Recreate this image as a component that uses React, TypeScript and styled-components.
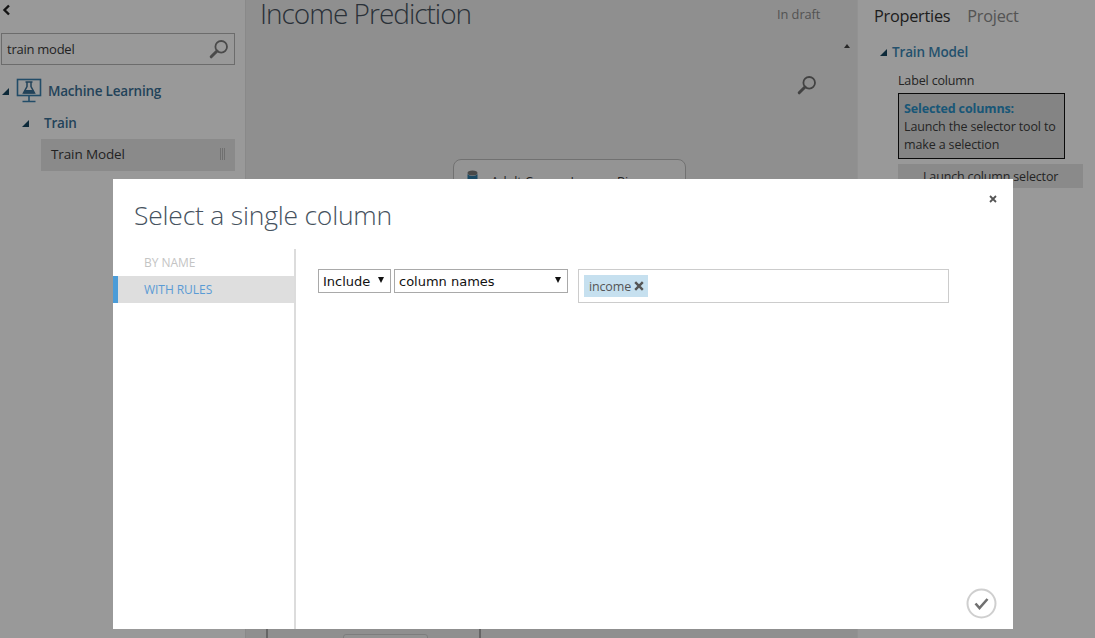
import React from "react";
import styled, { createGlobalStyle } from "styled-components";

const GlobalStyle = createGlobalStyle`
  html, body {
    margin: 0;
    padding: 0;
    background: #fff;
  }
  * {
    box-sizing: border-box;
  }
`;

const Page = styled.div`
  position: relative;
  width: 1095px;
  height: 638px;
  overflow: hidden;
  display: grid;
  grid-template-columns: 245px 612px 238px;
  font-family: "Open Sans", "Noto Sans", sans-serif;
  color: #3c3c3c;
  background: #fff;
`;

const Scrim = styled.div`
  position: absolute;
  inset: 0;
  background: rgba(0, 0, 0, 0.4);
`;

/* left palette */
const Palette = styled.aside`
  display: flex;
  flex-direction: column;
  padding: 0 10px 0 1px;
  background: #fff;
`;

const BackRow = styled.div`
  height: 33px;
  padding: 4px 0 0 1px;
  svg {
    display: block;
  }
`;

const SearchBox = styled.div`
  display: flex;
  align-items: center;
  justify-content: space-between;
  height: 32px;
  padding: 0 5px 0 5px;
  border: 1px solid #b4b4b4;
  font-size: 13px;
  letter-spacing: -0.25px;
  color: #3a3a3a;
`;

const TreeRow = styled.div<{ $indent: number; $height: number }>`
  display: flex;
  align-items: center;
  height: ${(p) => p.$height}px;
  padding-left: ${(p) => p.$indent}px;
  font-size: 13.5px;
  font-weight: 600;
  letter-spacing: -0.2px;
  color: #3a7096;
`;

const Caret = styled.span<{ $gap: number }>`
  width: 0;
  height: 0;
  margin-right: ${(p) => p.$gap}px;
  border-style: solid;
  border-width: 0 0 7px 7px;
  border-color: transparent transparent #14455f transparent;
`;

const ModuleRow = styled.div`
  display: flex;
  align-items: center;
  justify-content: space-between;
  height: 32px;
  margin: 10px 0 0 40px;
  padding: 0 10px 2px 10px;
  background: #e6e6e6;
  font-size: 13.5px;
  letter-spacing: -0.12px;
  color: #3a3a3a;
`;

const Grip = styled.span`
  width: 5px;
  height: 12px;
  border-left: 1px solid #bbb;
  border-right: 1px solid #bbb;
  background: linear-gradient(90deg, transparent 1px, #bbb 1px, #bbb 2px, transparent 2px);
`;

const FlaskIcon = styled.svg`
  flex: none;
  margin-right: 6px;
`;

/* experiment canvas */
const Canvas = styled.main`
  position: relative;
  background: #efefef;
  border-left: 1px solid #e4e4e4;
`;

const ExperimentTitle = styled.h1`
  position: absolute;
  top: -1px;
  left: 14px;
  margin: 0;
  font-size: 28px;
  line-height: 28px;
  font-weight: 300;
  letter-spacing: -1.01px;
  white-space: nowrap;
  color: #46525e;
`;

const DraftLabel = styled.span`
  position: absolute;
  top: 5px;
  left: 531px;
  font-size: 12.8px;
  letter-spacing: -0.05px;
  color: #8a8a8a;
`;

const ScrollArrow = styled.span`
  position: absolute;
  top: 44px;
  left: 598px;
  width: 0;
  height: 0;
  border-style: solid;
  border-width: 0 3.5px 4px 3.5px;
  border-color: transparent transparent #444 transparent;
`;

const ZoomIcon = styled.span`
  position: absolute;
  top: 75px;
  left: 551px;
  line-height: 0;
`;

const DatasetNode = styled.div`
  position: absolute;
  top: 159px;
  left: 207px;
  width: 233px;
  height: 60px;
  padding: 13px 0 0 37px;
  border: 1px solid #bdbdbd;
  border-radius: 8px;
  background: #f7f7f7;
  font-size: 12.5px;
  color: #3a3a3a;
`;

const DatasetIcon = styled.span`
  position: absolute;
  top: 10px;
  left: 13px;
  line-height: 0;
`;

const ContainerEdge = styled.span<{ $left: number }>`
  position: absolute;
  top: 620px;
  left: ${(p) => p.$left}px;
  width: 2px;
  height: 18px;
  background: #a8a8a8;
`;

const BottomNode = styled.div`
  position: absolute;
  top: 634px;
  left: 97px;
  width: 85px;
  height: 10px;
  border: 1px solid #d0d0d0;
  border-radius: 3px;
  background: #f4f4f4;
`;

/* properties panel */
const Properties = styled.aside`
  display: flex;
  flex-direction: column;
  padding: 4px 12px 0 16px;
  background: #fff;
  border-left: 1px solid #f4f4f4;
`;

const Tabs = styled.div`
  display: flex;
  gap: 17px;
  height: 35px;
`;

const Tab = styled.span<{ $active?: boolean }>`
  font-size: 16.3px;
  line-height: 24px;
  letter-spacing: -0.25px;
  color: ${(p) => (p.$active ? "#333" : "#8c8c8c")};
`;

const SectionTitle = styled.div`
  display: flex;
  align-items: center;
  gap: 5px;
  height: 26px;
  padding-left: 6px;
  font-size: 13.5px;
  font-weight: 600;
  letter-spacing: -0.15px;
  color: #3c88b6;
`;

const FieldLabel = styled.div`
  margin: 6px 0 0 24px;
  height: 22px;
  font-size: 12.5px;
  line-height: 20px;
  letter-spacing: -0.15px;
  color: #3c3c3c;
`;

const SelectionBox = styled.div`
  margin: 0 18px 0 24px;
  padding: 6px 5px 0 5px;
  height: 66px;
  border: 1px solid #111;
  background: #dcdcdc;
  font-size: 12.5px;
  line-height: 18px;
  letter-spacing: -0.14px;
  color: #3c3c3c;
  strong {
    display: block;
    font-weight: 700;
    color: #2a90c6;
  }
`;

const SelectorButton = styled.div`
  margin: 5px 0 0 24px;
  height: 24px;
  padding-left: 25px;
  background: #e6e6e6;
  font-size: 12.5px;
  line-height: 25px;
  letter-spacing: -0.16px;
  color: #3c3c3c;
`;

/* dialog */
const Dialog = styled.section`
  position: absolute;
  top: 179px;
  left: 113px;
  width: 900px;
  height: 450px;
  display: flex;
  flex-direction: column;
  background: #fff;
`;

const DialogHeader = styled.header`
  height: 70px;
  padding: 16px 0 0 21px;
`;

const DialogTitle = styled.h2`
  margin: 0;
  font-size: 26.5px;
  line-height: 40px;
  font-weight: 300;
  letter-spacing: -0.22px;
  color: #46525e;
`;

const CloseButton = styled.span`
  position: absolute;
  top: 16px;
  left: 876px;
  line-height: 0;
`;

const DialogBody = styled.div`
  flex: 1;
  display: flex;
  min-height: 0;
`;

const Nav = styled.nav`
  flex: none;
  width: 183px;
  border-right: 2px solid #dcdcdc;
`;

const NavItem = styled.div<{ $active?: boolean }>`
  height: 27px;
  padding-left: ${(p) => (p.$active ? 26 : 31)}px;
  border-left: ${(p) => (p.$active ? "5px solid #4b9cd8" : "none")};
  background: ${(p) => (p.$active ? "#dedede" : "transparent")};
  font-size: 12px;
  line-height: 27px;
  letter-spacing: -0.05px;
  color: ${(p) => (p.$active ? "#5a9bd5" : "#c4c4c4")};
`;

const RuleArea = styled.div`
  flex: 1;
  display: flex;
  align-items: flex-start;
  padding: 20px 0 0 22px;
`;

const SelectBox = styled.div<{ $width: number; $gap: number }>`
  display: flex;
  align-items: center;
  justify-content: space-between;
  width: ${(p) => p.$width}px;
  height: 24px;
  margin-right: ${(p) => p.$gap}px;
  padding: 0 6px 0 4px;
  border: 1px solid #a9a9a9;
  font-family: "DejaVu Sans", sans-serif;
  font-size: 13px;
  color: #111;
`;

const SelectArrow = styled.span`
  width: 0;
  height: 0;
  margin-bottom: 2px;
  border-style: solid;
  border-width: 6px 3.5px 0 3.5px;
  border-color: #111 transparent transparent transparent;
`;

const TagInput = styled.div`
  display: flex;
  align-items: center;
  width: 371px;
  height: 34px;
  padding-left: 5px;
  border: 1px solid #ccc;
`;

const Tag = styled.span`
  display: flex;
  align-items: center;
  gap: 3px;
  height: 22px;
  padding: 0 4px 0 5px;
  background: #c6e0ef;
  font-size: 12.5px;
  letter-spacing: -0.15px;
  color: #555;
`;

const ConfirmButton = styled.span`
  position: absolute;
  top: 409px;
  left: 853px;
  line-height: 0;
`;

const SearchGlyph = ({ size, color }: { size: number; color: string }) => (
  <svg width={size} height={size} viewBox="0 0 20 20" fill="none">
    <circle cx="12.2" cy="7.8" r="5.8" stroke={color} strokeWidth="1.8" />
    <path d="M8 12 L2.2 17.8" stroke={color} strokeWidth="3" strokeLinecap="round" />
  </svg>
);

export default function App() {
  return (
    <>
      <GlobalStyle />
      <Page>
        <Palette>
          <BackRow>
            <svg width="9" height="12" viewBox="0 0 9 12" fill="none">
              <path d="M7 1.5 L2.5 6 L7 10.5" stroke="#222" strokeWidth="2.4" />
            </svg>
          </BackRow>
          <SearchBox>
            train model
            <SearchGlyph size={20} color="#7c7c7c" />
          </SearchBox>
          <TreeRow $indent={1} $height={52}>
            <Caret $gap={7} />
            <FlaskIcon width="26" height="26" viewBox="0 0 26 26" fill="none">
              <rect x="1.5" y="1.5" width="23" height="16" stroke="#3a7fae" strokeWidth="1.6" />
              <path d="M9.5 4 H16.5 M11 4 V8.5 L7.5 15 H18.5 L15 8.5 V4" stroke="#3a6f94" strokeWidth="1.5" />
              <path d="M8.5 12 H17.5 L18.5 15.5 H7.5 Z" fill="#3a6f94" />
              <path d="M13 18 V23 M6.5 23.5 H19.5" stroke="#3a7fae" strokeWidth="1.6" />
            </FlaskIcon>
            Machine Learning
          </TreeRow>
          <TreeRow $indent={21} $height={12}>
            <Caret $gap={15} />
            Train
          </TreeRow>
          <ModuleRow>
            Train Model
            <Grip />
          </ModuleRow>
        </Palette>

        <Canvas>
          <ExperimentTitle>Income Prediction</ExperimentTitle>
          <DraftLabel>In draft</DraftLabel>
          <ScrollArrow />
          <ZoomIcon>
            <SearchGlyph size={20} color="#6f6f6f" />
          </ZoomIcon>
          <DatasetNode>
            <DatasetIcon>
              <svg width="11" height="16" viewBox="0 0 11 16">
                <ellipse cx="5.5" cy="3" rx="5" ry="2.5" fill="#7a7a7a" />
                <path d="M0.5 4 C2 6.5 9 6.5 10.5 4 V13 C9 15.5 2 15.5 0.5 13 Z" fill="#2d7aa5" />
              </svg>
            </DatasetIcon>
            Adult Census Income Binary
          </DatasetNode>
          <ContainerEdge $left={20} />
          <ContainerEdge $left={233} />
          <BottomNode />
        </Canvas>

        <Properties>
          <Tabs>
            <Tab $active>Properties</Tab>
            <Tab>Project</Tab>
          </Tabs>
          <SectionTitle>
            <Caret $gap={0} />
            Train Model
          </SectionTitle>
          <FieldLabel>Label column</FieldLabel>
          <SelectionBox>
            <strong>Selected columns:</strong>
            Launch the selector tool to make a selection
          </SelectionBox>
          <SelectorButton>Launch column selector</SelectorButton>
        </Properties>

        <Scrim />

        <Dialog>
          <DialogHeader>
            <DialogTitle>Select a single column</DialogTitle>
          </DialogHeader>
          <CloseButton>
            <svg width="8" height="8" viewBox="0 0 8 8">
              <path d="M1 1 L7 7 M7 1 L1 7" stroke="#555" strokeWidth="1.8" />
            </svg>
          </CloseButton>
          <DialogBody>
            <Nav>
              <NavItem>BY NAME</NavItem>
              <NavItem $active>WITH RULES</NavItem>
            </Nav>
            <RuleArea>
              <SelectBox $width={73} $gap={3}>
                Include
                <SelectArrow />
              </SelectBox>
              <SelectBox $width={174} $gap={10}>
                column names
                <SelectArrow />
              </SelectBox>
              <TagInput>
                <Tag>
                  income
                  <svg width="10" height="10" viewBox="0 0 10 10">
                    <path d="M1.2 1.2 L8.8 8.8 M8.8 1.2 L1.2 8.8" stroke="#555" strokeWidth="2.4" />
                  </svg>
                </Tag>
              </TagInput>
            </RuleArea>
          </DialogBody>
          <ConfirmButton>
            <svg width="31" height="31" viewBox="0 0 31 31" fill="none">
              <circle cx="15.5" cy="15.5" r="14" stroke="#cfcfcf" strokeWidth="2" />
              <path d="M9.5 15.5 L13.5 20 L21.5 11" stroke="#707070" strokeWidth="2.6" />
            </svg>
          </ConfirmButton>
        </Dialog>
      </Page>
    </>
  );
}
